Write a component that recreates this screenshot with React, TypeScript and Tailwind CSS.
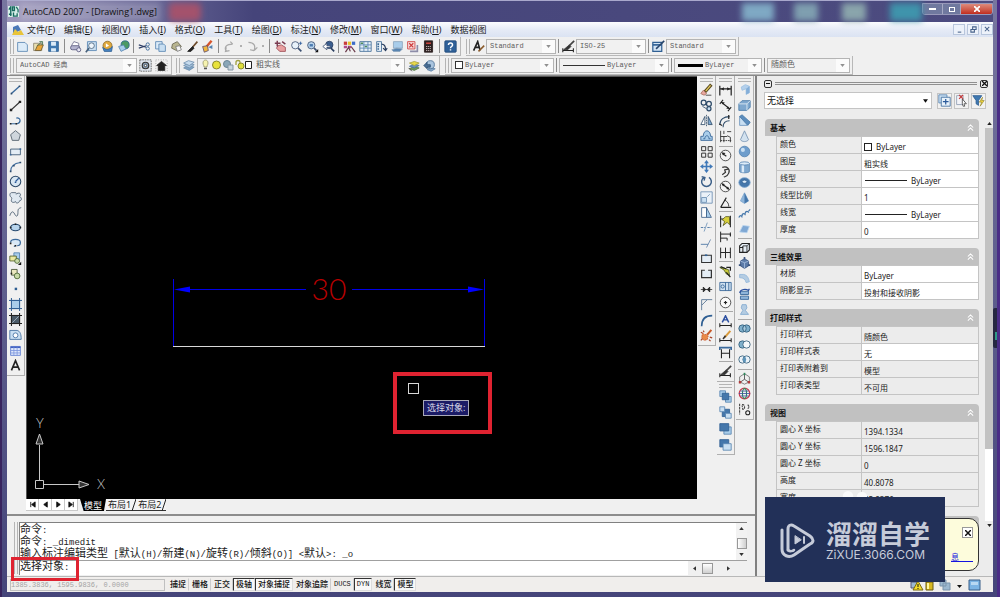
import React from 'react';
import clsx from 'clsx';

const CJK = 'font-["Noto_Sans","Noto_Sans_CJK_SC",sans-serif]';
const MONO = 'font-["Liberation_Mono","Noto_Sans_CJK_SC",monospace]';

// All icons are drawn on a 16x16 grid
const icons: Record<string, React.ReactNode> = {
  // standard toolbar
  new: <path d="M2 3h9l3 3v8H2z" fill="#dcebf8" stroke="#5583b0" />,
  open: (
    <>
      <path d="M2 4h10v9H2z" fill="#e9dfb0" stroke="#8a8470" />
      <path d="M4 13l3-7h7l-3 7z" fill="#e8a63a" stroke="#6b5a30" />
      <path d="M7 7l5-5M9 2h4v4" stroke="#3b6b45" />
    </>
  ),
  save: (
    <>
      <path d="M2 2h12v12H2z" fill="#3f78b0" stroke="#2f5f93" />
      <path d="M5 2h6v5H5zM5 10h6v4H5z" fill="#dcebf8" stroke="none" />
    </>
  ),
  plot: (
    <>
      <path d="M3 7l3-5 6 2v4" fill="#fff" stroke="#6a6a8a" />
      <rect x="2" y="7" width="11" height="5" rx="2" fill="#b5b5d0" stroke="#54547a" />
      <circle cx="12" cy="12" r="2.500" fill="#e8e8f4" stroke="#54547a" />
    </>
  ),
  preview: (
    <>
      <path d="M3 2h11v11H3z" fill="#c9dff2" stroke="#5583b0" />
      <circle cx="8" cy="7" r="3.500" fill="#eef6fc" stroke="#48617a" />
      <path d="M5 10l-4 5" stroke="#48617a" strokeWidth="2" />
    </>
  ),
  publish: (
    <>
      <circle cx="8" cy="7" r="5.500" fill="#e0a93c" stroke="#8c6a28" />
      <path d="M2 9c4 4 9 3 12-1l-1 6H4z" fill="#4a86c4" stroke="#2f5f93" />
      <path d="M6 4l4 3-4 2z" fill="#fff" stroke="none" />
    </>
  ),
  dwf: (
    <>
      <circle cx="10" cy="6" r="5" fill="#4c9a62" stroke="#2c6490" />
      <path d="M2 8l6-2 3 5-6 3z" fill="#a9cdea" stroke="#5583b0" />
    </>
  ),
  cut: (
    <>
      <path d="M1 6l9 3M1 10l9-3" stroke="#2c3e66" strokeWidth="1.300" />
      <circle cx="12" cy="5.500" r="2" stroke="#2f5f93" />
      <circle cx="12" cy="10.500" r="2" stroke="#2f5f93" />
    </>
  ),
  copy: (
    <>
      <path d="M2 2h8v9H2z" fill="#dcebf8" stroke="#5583b0" />
      <path d="M6 5h6l2 2v7H6z" fill="#c9dff2" stroke="#5583b0" />
    </>
  ),
  paste: (
    <>
      <path d="M3 5l6-3 5 6-6 5-6-3z" fill="#b9b58f" stroke="#65624d" />
      <path d="M7 8l5-1 2 5-5 2z" fill="#f6f6f6" stroke="#777" />
    </>
  ),
  match: (
    <>
      <path d="M14 2L8 9" stroke="#6c4a2a" strokeWidth="2" />
      <path d="M8 8l2 2-4 4H2z" fill="#222" stroke="#222" />
    </>
  ),
  block: (
    <>
      <path d="M13 1L7 8" stroke="#d8552c" strokeWidth="3" />
      <path d="M2 8l6-1 1 6-5 2z" fill="#f2b63c" stroke="#5a4a6a" />
      <path d="M9 9l5-3v5z" fill="#5583b0" stroke="none" />
    </>
  ),
  undo: <path d="M4 14c-3-5 0-9 8-9M12 5L9 2M4 9l-1 5 5-1" stroke="#a9a9a9" strokeWidth="1.500" />,
  redo: <path d="M3 3c7 0 9 4 7 10M10 13l-5-1M10 13l4-4" stroke="#a9a9a9" strokeWidth="1.500" />,
  pan: (
    <>
      <path d="M5 7l4-1 5 3v5H7l-4-4z" fill="#e8a0a0" stroke="#9a4a50" />
      <path d="M4 1v7M1 4h7M10 2l4 3" stroke="#7a3c50" strokeWidth="1.800" />
    </>
  ),
  zoomRt: (
    <>
      <circle cx="6.500" cy="6.500" r="4.500" fill="#e8f2fa" stroke="#3b4f70" />
      <path d="M10 10l4 4" stroke="#3b4f70" strokeWidth="2" />
      <path d="M11 4h4M13 2v4" stroke="#2b5a9a" />
    </>
  ),
  zoomWin: (
    <>
      <circle cx="6.500" cy="6.500" r="4.500" fill="#b9d4ec" stroke="#3b4f70" />
      <path d="M4.500 5h4v3h-4z" fill="#4a7ab0" stroke="none" />
      <path d="M10 10l3 3" stroke="#3b4f70" strokeWidth="2" />
      <path d="M15 11v4h-4z" fill="#111" stroke="none" />
    </>
  ),
  zoomPrev: (
    <>
      <circle cx="9" cy="6" r="4.500" fill="#3b5f90" stroke="#2b3f60" />
      <path d="M11 10l4 4" stroke="#2b3f60" strokeWidth="2" />
      <path d="M1 8l5-4v3h4v2H6v3z" fill="#fff" stroke="#3b4f70" />
    </>
  ),
  props: (
    <>
      <path d="M1 2h4v4H1z" fill="#c83c3c" stroke="none" />
      <path d="M6 2h4v4H6z" fill="#e6c028" stroke="none" />
      <path d="M11 2h4v4h-4z" fill="#3c6cc8" stroke="none" />
      <path d="M1 7h4v3H1zM6 7h4v3H6z" fill="#b04a8a" stroke="none" />
      <path d="M3 15l4-6 2 5M10 8l5 7" stroke="#6a3a4a" strokeWidth="1.500" />
    </>
  ),
  center: (
    <>
      <path d="M1 2h14v12H1z" fill="#e6f0f8" stroke="#3f6a94" />
      <path d="M6 2v12M11 2v12M1 6h14M1 10h14" stroke="#5583b0" />
      <path d="M2 3h3v2H2zM7 7h3v2H7z" fill="#4b8a5c" stroke="none" />
    </>
  ),
  palettes: (
    <>
      <path d="M2 2h6v12H2z" fill="#e6f0f8" stroke="#3f6a94" />
      <path d="M4 4v8" stroke="#3f6a94" strokeWidth="2" strokeDasharray="2 1" />
      <path d="M8 5c4 0 5 3 5 7M10 10l3 3 2-3" stroke="#2b3f60" strokeWidth="1.500" />
    </>
  ),
  sheets: (
    <>
      <path d="M3 2h11v8H3z" fill="#a9cdea" stroke="#8aa4bc" />
      <path d="M1 12l6-2 7 1-3 3H3z" fill="#5583b0" stroke="#8aa4bc" />
    </>
  ),
  markup: (
    <>
      <path d="M2 2h9v9H2z" fill="#f8dcdc" stroke="#cc3b3b" />
      <path d="M4 4l5 5M9 4L4 9" stroke="#cc3b3b" strokeWidth="1.500" />
      <path d="M5 14h9V6" stroke="#8c8ca8" strokeWidth="2" />
    </>
  ),
  calc: (
    <>
      <path d="M3 1h10v14H3z" fill="#2c2020" stroke="#2c2020" />
      <path d="M5 3h6v2H5z" fill="#c6433c" stroke="none" />
      <path d="M5 8h6M5 10.500h6M5 13h6" stroke="#e8d8d8" strokeDasharray="1.500 1" />
    </>
  ),
  help: (
    <>
      <rect x="1" y="1" width="14" height="14" rx="1" fill="#2f6199" stroke="#234a78" />
      <path d="M5.500 6c0-3 5-3 5 0 0 2-2.500 2-2.500 4M8 11.500v1.500" stroke="#fff" strokeWidth="1.800" />
    </>
  ),
  textStyle: (
    <>
      <path d="M2 13L7 2l3 11M4 9h5" stroke="#222" strokeWidth="2" />
      <path d="M15 7l-5 5-2 2" stroke="#8a5a2a" strokeWidth="2" />
    </>
  ),
  dimStyle: (
    <>
      <path d="M1 13h13M1 10v5M14 10v5" stroke="#222" strokeWidth="1.300" />
      <path d="M15 1L9 7" stroke="#444" strokeWidth="2" />
      <path d="M9 6l2 2-4 4H2z" fill="#333" stroke="#333" />
    </>
  ),
  tableStyle: (
    <>
      <path d="M1 3h11v11H1z" fill="#d3e4f4" stroke="#2f5f93" strokeWidth="1.500" />
      <path d="M1 6h11" stroke="#2f5f93" strokeWidth="2" />
      <path d="M15 1L8 8l-3 3" stroke="#27456b" strokeWidth="2" />
    </>
  ),
  gear: (
    <>
      <path d="M1 1h14v14H1z" fill="#dfe6ee" stroke="#555" strokeDasharray="2 1" />
      <circle cx="8" cy="8" r="4" fill="#8ba4bd" stroke="#333" strokeWidth="1.500" />
      <circle cx="8" cy="8" r="1.500" fill="#fff" stroke="#333" />
    </>
  ),
  home: (
    <>
      <path d="M1 1h14v14H1z" stroke="#999" strokeDasharray="1 2" />
      <path d="M8 3l6 5h-2v6H4V8H2z" fill="#222" stroke="#222" />
    </>
  ),
  layers: (
    <>
      <path d="M2 11l6-3 7 2-6 4z" fill="#7ea3c4" stroke="#6f8fae" />
      <path d="M2 8l6-3 7 2-6 4z" fill="#a4c0da" stroke="#6f8fae" />
      <path d="M2 5l6-3 7 2-6 4z" fill="#c6dbee" stroke="#6f8fae" />
    </>
  ),
  layerPrev: (
    <>
      <path d="M3 12l6-3 6 2-6 3z" fill="#6c9a58" stroke="#567a48" />
      <path d="M3 9l6-3 6 2-6 3z" fill="#6a93bd" stroke="#4b6f95" />
      <path d="M3 5l6-2 6 2-6 3z" fill="#e6d94a" stroke="#a8a040" />
      <path d="M2 11l4 4" stroke="#333" />
    </>
  ),
  layerStates: (
    <>
      <path d="M5 13l5-2 5 1-5 3z" fill="#86aacb" stroke="#5b7fa5" />
      <circle cx="9" cy="7" r="5" fill="#a9c4de" stroke="#4b6f95" />
      <path d="M1 8l4-4v3h4v3H5v2z" fill="#4b6f95" stroke="#2b4f75" />
    </>
  ),
  // draw toolbar
  line: (
    <>
      <path d="M3 13L13 4" stroke="#3b6a9c" strokeWidth="1.700" />
      <path d="M2 12h2v2H2zM12 3h2v2h-2z" fill="#2b4a6c" stroke="none" />
    </>
  ),
  xline: (
    <>
      <path d="M2 14L14 3" stroke="#333" strokeWidth="1.500" />
      <path d="M1 12h3v3H1zM12 2h3v3h-3z" fill="#222" stroke="none" />
    </>
  ),
  pline: (
    <>
      <path d="M2 12h9M9 5c6-1 6 6 1 7" stroke="#3b6a9c" strokeWidth="1.500" />
      <path d="M1 11h2v2H1zM8 11h2v2H8z" fill="#222" stroke="none" />
    </>
  ),
  polygon: <path d="M8 2l6 5-2 7H4L2 7z" fill="#cfd6dc" stroke="#4a5864" />,
  rect: (
    <>
      <path d="M2 5h12v7H2z" fill="#e4edf5" stroke="#34506c" />
      <path d="M1 11h2v2H1zM13 4h2v2h-2z" fill="#3b6a9c" stroke="none" />
    </>
  ),
  arc: (
    <>
      <path d="M2 14c0-6 4-10 12-11" stroke="#3b6a9c" strokeWidth="1.300" />
      <path d="M1 13h2v2H1zM5 6h2v2H5zM13 2h2v2h-2z" fill="#2b4a6c" stroke="none" />
    </>
  ),
  circle: (
    <>
      <circle cx="8" cy="8" r="6.500" fill="#d8e6f2" stroke="#2d4a68" strokeWidth="1.300" />
      <path d="M8 8l4-4M7 9h2" stroke="#2b5a9a" strokeWidth="1.500" />
    </>
  ),
  cloud: (
    <path
      d="M3 2h5c1 0 1 1 1 2 1-2 6-2 5 1l-1 2c3 1 3 5 0 5-1 4-5 3-5 1-2 2-6 1-5-2 0-1 1-2 0-3-2-1-3-5 0-6z"
      fill="#dfe8f0"
      stroke="#45586b"
    />
  ),
  spline: <path d="M1 12c2-6 4-6 6-2s4 3 4-2 1-5 4-6" stroke="#3f5468" />,
  ellipse: (
    <>
      <ellipse cx="8" cy="8" rx="6" ry="4" fill="#b7d4ec" stroke="#25486e" strokeWidth="1.500" />
      <path d="M1 7h2v2H1zM13 7h2v2h-2zM7 3h2v2H7z" fill="#222" stroke="none" />
    </>
  ),
  ellipseArc: (
    <>
      <path d="M2 8c0-5 12-5 12 0 0 3-2 4-4 4M8 12l-2 1" fill="#d8e8f6" stroke="#3b6a9c" strokeWidth="1.500" />
      <path d="M1 8h2v2H1zM7 11h2v2H7z" fill="#222" stroke="none" />
    </>
  ),
  insert: (
    <>
      <path d="M6 1h7v8H6z" fill="#a9cdea" stroke="#4b7dac" />
      <path d="M1 5h8v6H1z" fill="#ece9a0" stroke="#4b5a20" />
      <circle cx="10" cy="11" r="3" fill="#c9dba8" stroke="#44602c" />
      <path d="M15 12v4h-4z" fill="#111" stroke="none" />
    </>
  ),
  makeBlock: (
    <>
      <path d="M3 3h7v7H3z" fill="#ece9c0" stroke="#3c4a2c" />
      <circle cx="10" cy="11" r="3.500" fill="#c9dba8" stroke="#44602c" />
      <path d="M2 7h2v2H2z" fill="#222" stroke="none" />
    </>
  ),
  point: <path d="M7 7h3v3H7z" fill="#2f5f93" stroke="none" />,
  hatch: (
    <>
      <path d="M3 3h10v10H3z" fill="#a9cdea" stroke="#2f5f93" />
      <path d="M3 0v16M13 0v16M0 3h16M0 13h16" stroke="#2f5f93" strokeWidth="1.200" />
    </>
  ),
  gradient: (
    <>
      <path d="M3 3h10v10H3z" fill="#4a5a68" stroke="#222" />
      <path d="M3 0v16M13 0v16M0 3h16M0 13h16" stroke="#222" strokeWidth="1.300" />
      <path d="M4 12l8-8" stroke="#aab8c4" />
    </>
  ),
  region: (
    <>
      <path d="M1 3h9c4 1 5 5 5 11H1z" fill="#c9dff2" stroke="#3b6a9c" />
      <circle cx="8" cy="9" r="3" fill="#fff" stroke="#3b6a9c" />
    </>
  ),
  table: (
    <>
      <path d="M2 3h12v11H2z" fill="#dfe8fb" stroke="#5a7ad0" />
      <path d="M2 4h12" stroke="#4060c0" strokeWidth="2" />
      <path d="M6 4v10M10 4v10M2 8h12M2 11h12" stroke="#7a94dc" />
    </>
  ),
  mtext: <path d="M3 14L8 2l5 12M5 10h6" stroke="#222" strokeWidth="2" />,
  // modify toolbar
  erase: (
    <>
      <path d="M14 2L6 11" stroke="#5a4a20" strokeWidth="4" />
      <path d="M13 3L7 10" stroke="#e8d060" strokeWidth="1.500" />
      <path d="M4 9l4 4-3 2-4-2z" fill="#e8a8a0" stroke="#a86a5a" />
      <path d="M7 15h7" stroke="#333" />
    </>
  ),
  copyObj: (
    <>
      <circle cx="4.500" cy="4.500" r="3" stroke="#2d4a68" strokeWidth="1.500" />
      <circle cx="11" cy="6" r="3" stroke="#2d4a68" strokeWidth="1.500" />
      <circle cx="11" cy="12" r="2.500" fill="#c9dff2" stroke="#2d4a68" strokeWidth="1.500" />
      <path d="M3 9l5 3" stroke="#2d4a68" />
    </>
  ),
  mirror: (
    <>
      <path d="M6 3v10H1z" fill="#fff" stroke="#2d4a68" />
      <path d="M10 3v10h5z" fill="#7fa8cf" stroke="#2d4a68" />
      <path d="M8 1v14" stroke="#2d4a68" strokeDasharray="2 1" />
    </>
  ),
  offset: (
    <>
      <path d="M1 14V9h3c0-9 9-9 9 0h2v5z" fill="#a9cdea" stroke="#2f5f93" />
      <path d="M4 12h2c0-5 5-5 5 0h2" stroke="#2f5f93" />
    </>
  ),
  array: <path d="M2 2h5v5H2zM10 2h5v5h-5zM2 10h5v5H2zM10 10h5v5h-5z" stroke="#333" strokeWidth="1.200" />,
  move: (
    <path d="M8 0l3 4H9v3h3V5l4 3-4 3V9H9v3h2l-3 4-3-4h2V9H4v2L0 8l4-3v2h3V4H5z" fill="#3f78b8" stroke="none" />
  ),
  rotate: <path d="M5 3a6 6 0 1 0 6 0M2 2l4 1-1 4" stroke="#3b5f88" strokeWidth="1.800" />,
  scale: (
    <>
      <path d="M1 1h14v14H1z" fill="#eaf1f8" stroke="#6a8cb0" />
      <path d="M2 8h6v6H2z" fill="#c9dff2" stroke="#6a8cb0" />
      <path d="M9 7l3-3" stroke="#6a8cb0" />
    </>
  ),
  stretch: (
    <>
      <path d="M2 2h6v12H2z" fill="#fff" stroke="#3b5f88" />
      <path d="M8 2l6 12H8z" fill="#a9cdea" stroke="#3b5f88" />
    </>
  ),
  trim: (
    <>
      <path d="M1 8h5M9 8h5" stroke="#3b6a9c" strokeDasharray="3 1" />
      <path d="M5 13l4-11" stroke="#6a90b6" />
    </>
  ),
  extend: (
    <>
      <path d="M1 9h9" stroke="#3b6a9c" />
      <path d="M8 13l5-10" stroke="#5f80a8" />
    </>
  ),
  breakPt: (
    <>
      <path d="M2 4h12v9H2z" fill="#e4edf5" stroke="#333" strokeWidth="1.300" />
      <path d="M6 3h3v2H6z" fill="#2f5f93" stroke="none" />
    </>
  ),
  breakObj: <path d="M6 4H2v9h12V4h-4" fill="#e4edf5" stroke="#333" strokeWidth="1.500" />,
  join: (
    <>
      <path d="M1 8h14" stroke="#333" />
      <path d="M4 5l3 3-3 3zM12 5L9 8l3 3z" fill="#222" stroke="#222" />
    </>
  ),
  chamfer: <path d="M2 15V9l7-7h6M2 9V2h7" stroke="#4b6a8c" />,
  fillet: <path d="M2 15C2 6 7 2 15 2" stroke="#2f5f93" strokeWidth="2" />,
  explode: (
    <>
      <path d="M14 1l-5 6" stroke="#c85a28" strokeWidth="2.500" />
      <path d="M3 5l3 2 3-1 1 3-1 4-4 1-3-3z" fill="#e88a4a" stroke="#c8502a" strokeDasharray="2 1" />
      <path d="M1 4l2 1M4 2l1 2M12 10l3 1M11 13l2 2M1 14l2-2" stroke="#a8452a" strokeWidth="1.500" />
    </>
  ),
  // dimension toolbar
  dimLinear: (
    <>
      <path d="M1 2v12M15 2v12M1 6h14" stroke="#222" strokeWidth="1.500" />
      <path d="M2 6l4-2v4zM14 6l-4-2v4z" fill="#222" stroke="none" />
    </>
  ),
  dimAligned: (
    <>
      <path d="M3 4l10 8M1 6l4-5M11 15l4-5" stroke="#222" strokeWidth="1.300" />
      <path d="M3 4l4 0-2 3zM13 12l-4 0 2-3z" fill="#222" stroke="none" />
    </>
  ),
  dimArc: (
    <>
      <path d="M1 12C1 5 6 2 13 2M5 15c0-6 3-8 8-8" stroke="#2d4a68" strokeWidth="1.300" />
      <path d="M12 0v5M0 11l4 2" stroke="#222" strokeWidth="1.500" />
    </>
  ),
  dimOrd: (
    <>
      <path d="M2 1v14M6 1v4M6 8v7M2 8h8M10 2h5M10 7l4 2v6" stroke="#222" />
      <path d="M2 13h13" stroke="#222" strokeDasharray="2 1" />
    </>
  ),
  dimRadius: (
    <>
      <circle cx="8" cy="8" r="6.500" fill="#f4f4f4" stroke="#333" />
      <path d="M9 9L5 6" stroke="#222" strokeWidth="1.500" />
      <path d="M3 4l5 1-3 3z" fill="#222" stroke="none" />
    </>
  ),
  dimJog: <path d="M4 3c6-2 10 2 8 7s-5 4-6 5M4 12l4-3-1-3 4-1" stroke="#333" strokeWidth="1.500" />,
  dimDia: (
    <>
      <circle cx="8" cy="8" r="6.500" fill="#f4f4f4" stroke="#333" />
      <path d="M4 5l8 6" stroke="#222" strokeWidth="1.500" />
      <path d="M3 4l4 1-2 3zM13 12l-4-1 2-3z" fill="#222" stroke="none" />
    </>
  ),
  dimAng: (
    <>
      <path d="M2 14h13M2 14L9 2" stroke="#222" strokeWidth="1.300" />
      <path d="M7 5c4 2 5 5 5 8" stroke="#222" />
    </>
  ),
  quickDim: (
    <>
      <path d="M2 1v14M14 1v14M2 5h12" stroke="#222" strokeWidth="1.300" />
      <path d="M8 2h5v10l-3-3-5 4 2-5-3-2z" fill="#d8d03a" stroke="#5a5a20" />
    </>
  ),
  dimBase: <path d="M2 2v13M2 5h12v3M2 10h8v3M14 3v4" stroke="#222" strokeWidth="1.200" />,
  dimCont: <path d="M2 2v13M8 2v13M14 2v13M2 8h12" stroke="#222" strokeWidth="1.200" />,
  leader: (
    <>
      <path d="M1 3l6 1 5 2 1 7-4-2-3-5z" fill="#c8c83a" stroke="#4a5a20" />
      <path d="M9 9l5 6M2 2l7 3M9 3h5v4" stroke="#222" strokeWidth="1.500" />
    </>
  ),
  tolerance: (
    <>
      <path d="M1 3h14v10H1z" fill="#cfe0f0" stroke="#2f5f93" />
      <path d="M8 3v10M12 3v10" stroke="#2f5f93" />
      <circle cx="4.500" cy="8" r="2" stroke="#2f5f93" />
    </>
  ),
  centerMark: (
    <>
      <circle cx="8" cy="8" r="6.500" fill="#fafafa" stroke="#333" />
      <path d="M8 6v4M6 8h4" stroke="#222" strokeWidth="1.500" />
    </>
  ),
  dimEdit: (
    <>
      <path d="M4 9l4-8 4 8M5 6h6" stroke="#2b4fa0" strokeWidth="1.800" />
      <path d="M1 13h14M1 10v5M15 10v5" stroke="#222" strokeWidth="1.300" />
    </>
  ),
  dimTextEdit: (
    <>
      <path d="M14 1L7 9" stroke="#d89a3c" strokeWidth="2.500" />
      <path d="M8 7l-3 4" stroke="#333" strokeWidth="2" />
      <path d="M1 13h14M1 10v5M15 10v5" stroke="#222" strokeWidth="1.300" />
    </>
  ),
  dimUpdate: (
    <>
      <path d="M1 2h14M1 1v4M15 1v4" stroke="#3b6a9c" strokeWidth="2" />
      <path d="M3 4v11M13 4v11M3 9h10" stroke="#222" strokeWidth="1.300" />
    </>
  ),
  // draw order toolbar
  front: (
    <>
      <path d="M1 1h7v7H1zM8 8h7v7H8z" fill="#a9cdea" stroke="#5583b0" />
      <path d="M4 4h8v8H4z" fill="#4577ab" stroke="#2f5f93" />
    </>
  ),
  back: (
    <>
      <path d="M4 4h9v9H4z" fill="#4577ab" stroke="#2f5f93" />
      <path d="M1 1h6v6H1zM8 9h7v6H8z" fill="#c9dff2" stroke="#5583b0" />
    </>
  ),
  above: (
    <>
      <path d="M6 6h9v9H6z" fill="#a9cdea" stroke="#5583b0" />
      <path d="M1 2h11v9H1z" fill="#4577ab" stroke="#2f5f93" />
    </>
  ),
  under: (
    <>
      <path d="M1 2h11v9H1z" fill="#4577ab" stroke="#2f5f93" />
      <path d="M5 7h10v8H5z" fill="#c9dff2" stroke="#5583b0" />
    </>
  ),
  // solids toolbar
  polysolid: (
    <>
      <path d="M4 5l5-3 5 2v8l-4 2V7L5 9z" fill="#b4d0ec" stroke="#9cc0e2" />
      <path d="M10 7l4-3v8l-4 2z" fill="#84aed8" stroke="none" />
    </>
  ),
  box: (
    <>
      <path d="M1 6l4-4h10v8l-4 4H1z" fill="#7fa8cf" stroke="#4a7aa8" />
      <path d="M1 6h10v8M11 6l4-4" stroke="#e6f0f8" />
    </>
  ),
  wedge: (
    <>
      <path d="M2 3l12 8-3 3H2z" fill="#c9dff2" stroke="#6a93bd" />
      <path d="M2 3l3-2 10 9-3 4z" fill="#5c8dbd" stroke="#4a7aa8" />
    </>
  ),
  cone: <path d="M8 1l5 11c-2 3-8 3-10 0z" fill="#d3e2ef" stroke="#7390b0" />,
  sphere: (
    <>
      <circle cx="8" cy="8" r="6.500" fill="#6e9dcc" stroke="#5583b0" />
      <circle cx="6" cy="6" r="2.500" fill="#c9dff2" stroke="none" />
    </>
  ),
  cylinder: (
    <>
      <path d="M2 3v10c1 2 11 2 12 0V3" fill="#7fa8cf" stroke="#5583b0" />
      <path d="M6 4v10" stroke="#dcebf8" strokeWidth="3" />
      <ellipse cx="8" cy="3" rx="6" ry="2" fill="#dcebf8" stroke="#5583b0" />
    </>
  ),
  torus: (
    <>
      <ellipse cx="8" cy="8" rx="7" ry="6" fill="#4577ab" stroke="#7fa8cf" />
      <ellipse cx="8" cy="7" rx="3" ry="2" fill="#dcebf8" stroke="#2f5f93" />
    </>
  ),
  pyramid: (
    <>
      <path d="M8 1l5 10-5 3-5-3z" fill="#8fb5da" stroke="#7fa8cf" />
      <path d="M8 1l5 10-5 3z" fill="#4577ab" stroke="none" />
    </>
  ),
  helix: <path d="M1 13c2-4 4-2 4 0M5 11c0-4 4-3 4-1M9 8c0-4 4-3 4-1M13 5l2-2" stroke="#4577ab" strokeWidth="1.500" />,
  planar: <path d="M6 3l8 1-3 8-9-1z" fill="#7fa8d4" stroke="#b9d4ee" />,
  extrude: (
    <>
      <path d="M2 6l3-3h9v8l-3 3H6V8H2zM2 6v8h4M6 6v2" fill="#e4edf5" stroke="#222" strokeWidth="1.300" />
      <path d="M11 6v8M6 6h5l3-3" stroke="#222" />
    </>
  ),
  presspull: (
    <>
      <path d="M3 5l5-3 5 3v6l-5 3-5-3z" fill="#5c7ba8" stroke="#3b5580" />
      <path d="M3 5l5 2 5-2M8 7v7" stroke="#a8bfe0" />
      <path d="M1 10h3M12 10h3M8 0v3" stroke="#3b5580" strokeWidth="2" />
    </>
  ),
  sweep: <path d="M2 3h5c5 1 6 5 7 9l-4 1c-1-4-3-6-8-6z" fill="#b4cce2" stroke="#8fb5da" />,
  revolve: (
    <>
      <path d="M3 4h10v4H3zM3 10h10v4H3z" fill="#8fb5da" stroke="#2f5f93" />
      <path d="M2 6c1-5 8-5 11-3l1-2" stroke="#2b4fa0" strokeWidth="1.500" />
    </>
  ),
  loft: <path d="M5 2h5l1 4-2 3 4 5H3l3-5-2-3z" fill="#b4cce2" stroke="#7fa8cf" />,
  union: (
    <>
      <circle cx="5.500" cy="8" r="4.500" fill="#7fb0cc" stroke="#2d5a78" />
      <circle cx="10.500" cy="8" r="4.500" fill="#7fb0cc" stroke="#2d5a78" />
      <ellipse cx="8" cy="8" rx="2" ry="3.500" fill="#a8cce0" stroke="#2d5a78" />
    </>
  ),
  subtract: (
    <>
      <circle cx="5.500" cy="8" r="4.500" fill="#7fb0cc" stroke="#2d5a78" />
      <circle cx="10.500" cy="8" r="4.500" fill="#f4f8fb" stroke="#2d5a78" />
    </>
  ),
  intersect: (
    <>
      <circle cx="5.500" cy="8" r="4.500" fill="#eaf2f8" stroke="#2d5a78" />
      <circle cx="10.500" cy="8" r="4.500" fill="#eaf2f8" stroke="#2d5a78" />
      <ellipse cx="8" cy="8" rx="2" ry="3.500" fill="#5c93b8" stroke="none" />
    </>
  ),
  orbitC: (
    <>
      <path d="M8 9V2M8 9l-6 4M8 9l6 4" stroke="#444" />
      <path d="M2 6l6-4 6 4v6l-6 3-6-3z" stroke="#6a6a6a" />
      <path d="M7 1h2v3H7z" fill="#2b8a5a" stroke="none" />
      <path d="M1 11h3v3H1zM12 11h3v3h-3z" fill="#b03c3c" stroke="none" />
    </>
  ),
  orbitF: (
    <>
      <circle cx="8" cy="8" r="6.500" stroke="#c83c50" strokeWidth="1.500" />
      <ellipse cx="8" cy="8" rx="2.500" ry="6" stroke="#2b8a5a" strokeWidth="1.300" />
      <path d="M1 8h14M3 5h10M3 11h10" stroke="#3b4fa0" />
    </>
  ),
  walk: (
    <>
      <path d="M2 1v13M5 2c4-1 4 6 1 6l-1-5M12 2l2 3-2 2" stroke="#444" strokeWidth="1.300" strokeDasharray="3 1" />
      <circle cx="12" cy="12" r="2.500" stroke="#222" strokeWidth="1.300" />
    </>
  ),
  // properties palette buttons
  pickadd: (
    <>
      <path d="M1 1h10v10H1z" fill="#c9dff2" stroke="#5583b0" />
      <path d="M4 4h11v11H4z" fill="#e8f2fa" stroke="#3b6a9c" />
      <path d="M9.500 6v7M6 9.500h7" stroke="#2b5a9a" strokeWidth="1.500" />
    </>
  ),
  selectObj: (
    <>
      <path d="M2 2h8v11H2z" fill="#f4f4f8" stroke="#8c9ab0" />
      <path d="M5 1l5 5M10 1L5 6" stroke="#c83c3c" strokeWidth="1.500" />
      <path d="M9 6l5 6h-3l1 3-2 0-1-3z" fill="#fff" stroke="#444" />
    </>
  ),
  quickSel: (
    <>
      <path d="M1 2h11L8 8v6l-3-2V8z" fill="#3f78b0" stroke="#2f5f93" />
      <path d="M13 4l-4 6h3l-2 5 5-7h-3z" fill="#f0d83c" stroke="#8a7a20" strokeWidth=".7" />
    </>
  ),
};

const Icon = ({ name }: { name: string }) => (
  <svg viewBox="0 0 16 16" fill="none" className="size-[13px] shrink-0" aria-hidden="true">
    {icons[name]}
  </svg>
);

const ToolButton = ({ name }: { name: string }) => (
  <button type="button" aria-label={name} className="flex size-[15px] shrink-0 items-center justify-center">
    <Icon name={name} />
  </button>
);

const Grip = () => <span className="h-[15px] w-[4px] shrink-0 border-x border-[#b4b4b4]" />;
const Sep = () => <span className="mx-[2px] h-[14px] w-px shrink-0 bg-[#8c8c8c]" />;

const Bar = ({ children, className }: { children: React.ReactNode; className?: string }) => (
  <div className={clsx('flex h-full shrink-0 items-center border-r border-b border-[#b8b8b8] pr-[2px]', className)}>
    {children}
  </div>
);

interface ComboProps {
  label: string;
  value: string;
  lead?: React.ReactNode;
  large?: boolean;
  className: string;
}

const Combo: React.FC<ComboProps> = ({ label, value, lead, large = false, className }) => (
  <div className={clsx('flex h-[15px] shrink-0 items-center border border-[#b4b4b4] bg-[#f1f1f1] pl-[3px]', className)}>
    {lead}
    <select
      aria-label={label}
      className={clsx(
        'h-full min-w-0 flex-1 appearance-none text-[#5c5c5c] outline-none',
        large ? 'text-[8px]' : 'text-[7px]',
        MONO
      )}
    >
      <option>{value}</option>
    </select>
    <span className="flex h-full w-[13px] items-center justify-center bg-[#fbfbfb]">
      <svg viewBox="0 0 6 4" className="h-[3px] w-[5px]" aria-hidden="true">
        <path d="M0 0h6L3 4z" fill="#909090" />
      </svg>
    </span>
  </div>
);

const toolGroups = [
  ['new', 'open', 'save'],
  ['plot', 'preview', 'publish', 'dwf'],
  ['cut', 'copy', 'paste', 'match', 'block'],
  ['undo', 'dot', 'redo', 'dot'],
  ['pan', 'zoomRt', 'zoomWin', 'zoomPrev'],
  ['props', 'center', 'palettes', 'sheets', 'markup', 'calc'],
  ['help'],
];

const menus = ['文件(F)', '编辑(E)', '视图(V)', '插入(I)', '格式(O)', '工具(T)', '绘图(D)', '标注(N)', '修改(M)', '窗口(W)', '帮助(H)', '数据视图'];

const drawTools = [
  'line', 'xline', 'pline', 'polygon', 'rect', 'arc', 'circle', 'cloud', 'spline', 'ellipse',
  'ellipseArc', 'insert', 'makeBlock', 'point', 'hatch', 'gradient', 'region', 'table', 'mtext',
];

const modifyTools = [
  'erase', 'copyObj', 'mirror', 'offset', 'array', 'move', 'rotate', 'scale', 'stretch', 'trim',
  'extend', 'breakPt', 'breakObj', 'join', 'chamfer', 'fillet', 'explode',
];

const dimTools = [
  'dimLinear', 'dimAligned', 'dimArc', 'dimOrd', '-', 'dimRadius', 'dimJog', 'dimDia', 'dimAng', '-',
  'quickDim', 'dimBase', 'dimCont', '-', 'leader', 'tolerance', 'centerMark', '-',
  'dimEdit', 'dimTextEdit', 'dimUpdate', '-', 'dimStyle',
];

const orderTools = ['front', 'back', 'above', 'under'];

const solidTools = [
  'polysolid', 'box', 'wedge', 'cone', 'sphere', 'cylinder', 'torus', 'pyramid', 'helix', 'planar', '-',
  'extrude', 'presspull', 'sweep', 'revolve', 'loft', '-', 'union', 'subtract', 'intersect', '-',
  'orbitC', 'orbitF', 'walk',
];

const ToolColumn = ({ tools, className }: { tools: string[]; className: string }) => (
  <div className={clsx('flex w-[18px] shrink-0 flex-col items-center justify-between border-r border-b border-[#b0b0b0] pb-[2px]', className)}>
    <span className="mt-[2px] h-[4px] w-[13px] shrink-0 border-y border-[#b4b4b4]" />
    {tools.map((tool, i) =>
      tool === '-' ? (
        <span key={i} className="my-px h-px w-[14px] shrink-0 bg-[#a8a8a8]" />
      ) : (
        <ToolButton key={i} name={tool} />
      )
    )}
  </div>
);

const TitleBar = () => (
  <header className="flex h-[22px] shrink-0 items-start justify-between border-t border-[#a9a8cc] bg-linear-to-r from-[#9d97bb] via-[#45447a] via-25% to-[#4d4c80]">
    <div className="flex h-full min-w-0 flex-1 items-center">
      <svg viewBox="0 0 12 12" className="ml-px size-[11px]" aria-hidden="true">
        <rect width="12" height="12" fill="#d6efe8" />
        <path d="M1 4l2-3v10M5 1h2v4H5zM9 1l2 3v3M1 9h3M6 7v4h4V8" stroke="#17695f" strokeWidth="1.500" fill="none" />
      </svg>
      <h1 className='ml-1 bg-white/20 font-["Open_Sans",sans-serif] text-[9px] leading-3 whitespace-nowrap text-[#111] shadow-[0_0_6px_4px_rgba(255,255,255,0.2)]'>
        AutoCAD 2007 - [Drawing1.dwg]
      </h1>
      <span className="ml-3 h-[18px] w-8 rounded-sm bg-[#a4526c] blur-[3px]" />
      <span className="ml-auto h-[18px] w-8 bg-[#7fa9c4] blur-[3px]" />
      <span className="ml-5 h-[18px] w-6 bg-[#7f9fb0] blur-[3px]" />
      <span className="ml-6 h-[18px] w-6 bg-[#8aa5ac] blur-[3px]" />
      <span className="ml-6 h-[18px] w-8 bg-[#3f94ac] blur-[3px]" />
    </div>
    <div className="mt-[2px] flex h-[12px] overflow-hidden rounded-b-[3px] border border-[#c9cbe0]/60">
      <button type="button" aria-label="最小化" className="flex w-[20px] items-center justify-center border-r border-[#c9cbe0]/60 bg-[#70799f]">
        <span className="h-[2px] w-[7px] bg-white" />
      </button>
      <button type="button" aria-label="最大化" className="flex w-[18px] items-center justify-center border-r border-[#c9cbe0]/60 bg-[#70799f]">
        <span className="h-[5px] w-[6px] border border-white" />
      </button>
      <button type="button" aria-label="关闭" className="flex w-[31px] items-center justify-center bg-linear-to-b from-[#dd8a7c] to-[#c02a1c]">
        <svg viewBox="0 0 6 6" className="size-[6px]" aria-hidden="true">
          <path d="M0 0l6 6M6 0L0 6" stroke="#fff" strokeWidth="1.700" />
        </svg>
      </button>
    </div>
  </header>
);

const MenuBar = () => (
  <nav className="flex h-[15px] shrink-0 items-center bg-linear-to-b from-[#fbfcfe] via-[#e6ebf6] to-[#dbe3f2] pl-[5px]">
    <svg viewBox="0 0 12 12" className="size-[12px] shrink-0" aria-hidden="true">
      <path d="M1 3l5-2 3 5-8 4z" fill="#4a78b8" />
      <path d="M0 11l3-6 3 3 3-2 3 5z" fill="#e8c43a" />
    </svg>
    <ul className={clsx('ml-[3px] flex gap-[9px] text-[9px] leading-[13px] text-[#1c1c1c]', CJK)}>
      {menus.map((menu) => (
        <li key={menu} className="shrink-0">
          <button type="button" className="block whitespace-nowrap">
            {menu.slice(0, 2)}
            {menu.includes('(') ? <>({<u>{menu[3]}</u>})</> : menu.slice(2)}
          </button>
        </li>
      ))}
    </ul>
    <div className="ml-auto flex gap-[2px]">
      {['M2 7h4', 'M3 1h4v3H3zM1 4h4v3H1z', 'M1 1l5 5M6 1L1 6'].map((d) => (
        <button key={d} type="button" aria-label="窗口" className="flex h-[11px] w-[12px] items-center justify-center border border-[#b8c6dc] bg-[#edf2fa]">
          <svg viewBox="0 0 8 8" className="size-[7px]" aria-hidden="true">
            <path d={d} stroke="#46618a" strokeWidth="1.200" fill="none" />
          </svg>
        </button>
      ))}
    </div>
  </nav>
);

const layerLead = (
  <svg viewBox="0 0 52 12" className="mr-[3px] h-[12px] w-[52px] shrink-0" fill="none" aria-hidden="true">
    <path d="M2 4c0-4 5-4 5 0 0 2-1 2-1 4H3c0-2-1-2-1-4z" fill="#f6f3b0" stroke="#8a8a60" strokeWidth=".7" />
    <path d="M3 9.500h3" stroke="#555" strokeWidth="1.500" />
    <circle cx="15.500" cy="6" r="4" fill="#e8e23a" stroke="#8a8a30" />
    <circle cx="26" cy="5" r="3.500" fill="#8aa7b8" stroke="#6b8494" />
    <path d="M27 6h5v5h-5z" fill="#c9d6de" stroke="#8496a4" />
    <path d="M35 6V3c0-2 4-2 4 0v2" stroke="#a0a040" strokeWidth="1.300" />
    <circle cx="40" cy="7" r="3" fill="#dede3c" stroke="#8a8a30" />
    <path d="M44.500 2.500h6v7h-6z" fill="#fff" stroke="#222" />
  </svg>
);

const swatch = <span className="mr-[2px] size-[8px] shrink-0 border border-[#333] bg-white" />;

const Toolbars = () => (
  <>
    <div className="flex h-[19px] shrink-0 bg-[#f0f0f0] pl-[3px]">
      <Bar className="w-[451px] justify-between">
        <Grip />
        {toolGroups.map((group, i) => (
          <React.Fragment key={i}>
            {i > 0 && <Sep />}
            {group.map((tool, j) =>
              tool === 'dot' ? (
                <button key={j} type="button" aria-label="更多" className="flex h-[15px] w-[6px] items-center justify-center">
                  <span className="size-[2px] bg-[#b0b0b0]" />
                </button>
              ) : (
                <ToolButton key={j} name={tool} />
              )
            )}
          </React.Fragment>
        ))}
      </Bar>
      <Bar className="ml-[5px]">
        <Grip />
        <span className="w-px" />
        <ToolButton name="textStyle" />
        <Combo label="文字样式" value="Standard" className="w-[70px]" />
        <Sep />
        <ToolButton name="dimStyle" />
        <Combo label="标注样式" value="ISO-25" className="w-[70px]" />
        <Sep />
        <ToolButton name="tableStyle" />
        <Combo label="表格样式" value="Standard" className="w-[70px]" />
      </Bar>
    </div>
    <div className="flex h-[20px] shrink-0 border-b border-[#8a8a8a] bg-[#f0f0f0] pl-[3px]">
      <Bar className="gap-px">
        <Grip />
        <Combo label="工作空间" value="AutoCAD 经典" className="ml-px w-[121px]" />
        <ToolButton name="gear" />
        <ToolButton name="home" />
      </Bar>
      <Bar className="ml-[4px] gap-px">
        <Grip />
        <ToolButton name="layers" />
        <Combo label="图层" value="粗实线" lead={layerLead} large className="w-[208px]" />
        <ToolButton name="layerPrev" />
        <ToolButton name="layerStates" />
      </Bar>
      <Bar className="ml-[5px]">
        <Grip />
        <Combo label="颜色控制" value="ByLayer" lead={swatch} className="ml-[2px] w-[103px]" />
        <Sep />
        <Combo
          label="线型控制"
          value="ByLayer"
          lead={<span className="mr-[2px] h-px w-[42px] shrink-0 bg-[#333]" />}
          className="w-[110px]"
        />
        <Sep />
        <Combo
          label="线宽控制"
          value="ByLayer"
          lead={<span className="mr-[2px] h-[3px] w-[25px] shrink-0 bg-black" />}
          className="w-[88px]"
        />
        <Sep />
        <Combo label="打印样式控制" value="随颜色" large className="w-[83px]" />
      </Bar>
    </div>
  </>
);

const Drawing = () => (
  <main className="relative min-h-0 flex-1 overflow-hidden border-t border-l border-[#555] bg-black">
    <svg width="330" height="90" viewBox="0 0 330 90" className="absolute top-[192px] left-[136px]" aria-label="尺寸标注">
      <path d="M10.500 10v67M321.500 10v67M26 20.500h117M189 20.500h118" stroke="#0000e6" />
      <path d="M11 20.500l16-3v6zM321 20.500l-16-3v6z" fill="#0000ff" />
      <path d="M10 77.500h312" stroke="#d8d8d8" />
      <text x="166" y="31" textAnchor="middle" fill="#b80000" className='font-["Lato",sans-serif] text-[30px] font-light'>
        30
      </text>
    </svg>

    <svg width="90" height="84" viewBox="0 0 90 84" className="absolute bottom-0 left-[5px]" fill="none" aria-label="UCS">
      <path d="M3.500 65.500h8v8h-8zM7.500 65V30M12 69.500h36" stroke="#c8c8c8" />
      <path d="M7.500 19l3.500 10H4zM57 69.500L47 66v7z" fill="#333" stroke="#c8c8c8" />
      <text x="4" y="13" fill="#c8c8c8" className='font-["Lato",sans-serif] text-[13px] font-light'>Y</text>
      <text x="65" y="74" fill="#c8c8c8" className='font-["Lato",sans-serif] text-[13px] font-light'>X</text>
    </svg>

    <div className="absolute top-[295px] left-[366px] h-[62px] w-[99px] border-[4px] border-[#df2331]">
      <span className="absolute top-[7px] left-[11px] size-[11px] border border-[#d8d8d8]" />
      <span className={clsx('absolute top-[24px] left-[26px] border border-[#a8a8b8] bg-[#1b1b66] px-[3px] text-[9px] leading-[14px] whitespace-nowrap text-[#d8d8e8]', CJK)}>
        选择对象:
      </span>
    </div>
  </main>
);

const LayoutTabs = () => (
  <div className="flex h-[15px] shrink-0 items-start bg-[#f0f0f0]">
    {['M2 1v6M7 1L3 4l4 3z', 'M6 1L2 4l4 3z', 'M2 1l4 3-4 3z', 'M6 1v6M1 1l4 3-4 3z'].map((d) => (
      <button key={d} type="button" aria-label="布局导航" className="flex h-[12px] w-[13px] items-center justify-center border-r border-b border-[#c8c8c8] bg-white">
        <svg viewBox="0 0 8 8" className="size-[7px]" aria-hidden="true">
          <path d={d} fill="#111" stroke="#111" />
        </svg>
      </button>
    ))}
    <div className={clsx('flex h-[12px] text-[9px] leading-[11px]', CJK)}>
      <button type="button" className="ml-[2px] bg-black px-[4px] text-white [clip-path:polygon(0_0,100%_0,92%_100%,14%_100%)]">模型</button>
      {['布局1', '布局2'].map((tab) => (
        <button key={tab} type="button" className="flex border-b border-[#333] bg-[#f4f4f4] pl-[2px] text-[#222]">
          {tab}
          <svg viewBox="0 0 5 12" className="h-[12px] w-[5px]" aria-hidden="true">
            <path d="M5 0L1 12" stroke="#222" />
          </svg>
        </button>
      ))}
    </div>
  </div>
);

// Half-width characters are set smaller so two of them fill one ideograph
const CommandText = ({ text }: { text: string }) => (
  <>
    {text.split(/([\x20-\x7e]+)/).map((part, i) => (
      <span key={i} className={clsx('leading-none whitespace-pre', i % 2 === 1 && 'text-[9px]')}>
        {part}
      </span>
    ))}
  </>
);

const CommandWindow = () => (
  <section className="relative h-[62px] shrink-0 border-t-2 border-[#8c8c8c] bg-[#f0f0f0] pt-[6px] pr-[8px] pl-[7px]">
    <div className="flex">
      <span className="mr-px h-[52px] w-[4px] shrink-0 border-x border-[#b4b4b4]" />
      <div className="min-w-0 flex-1 border-t border-l border-[#808080]">
        <div className="flex h-[38px] border-b border-[#a0a0a0] bg-white">
          <div className={clsx('flex min-w-0 flex-1 flex-col justify-end text-[11px] text-[#222]', MONO)}>
            {['命令:', '命令: _dimedit', '输入标注编辑类型 [默认(H)/新建(N)/旋转(R)/倾斜(O)] <默认>: _o'].map((line) => (
              <p key={line} className="h-[12px] leading-[12px] whitespace-nowrap">
                <CommandText text={line} />
              </p>
            ))}
          </div>
          <div className="flex w-[11px] flex-col items-center justify-between bg-[#f2f2f2] py-[4px]">
            <svg viewBox="0 0 6 4" className="h-[3px] w-[5px]" aria-hidden="true"><path d="M0 4h6L3 0z" fill="#333" /></svg>
            <span className="mt-1 h-[11px] w-[10px] border border-[#989898] bg-linear-to-r from-white to-[#cfcfcf]" />
            <svg viewBox="0 0 6 4" className="h-[3px] w-[5px]" aria-hidden="true"><path d="M0 0h6L3 4z" fill="#333" /></svg>
          </div>
        </div>
        <div className="flex h-[14px] bg-white">
          <label htmlFor="command" className={clsx('shrink-0 text-[11px] leading-[13px] text-[#222]', MONO)}>
            <CommandText text="选择对象:" />
          </label>
          <input id="command" className="min-w-0 flex-1 outline-none" />
          <div className="flex w-[59px] items-center gap-[6px] bg-[#f0f0f0] pl-[5px]">
            <svg viewBox="0 0 4 6" className="h-[5px] w-[3px]" aria-hidden="true"><path d="M4 0v6L0 3z" fill="#333" /></svg>
            <span className="size-[11px] border border-[#989898] bg-linear-to-b from-white to-[#cfcfcf]" />
            <svg viewBox="0 0 4 6" className="ml-2 h-[5px] w-[3px]" aria-hidden="true"><path d="M0 0v6l4-3z" fill="#333" /></svg>
          </div>
        </div>
      </div>
    </div>
    <span className="absolute bottom-[-5px] left-[4px] z-10 h-[24px] w-[68px] border-[3px] border-[#df2331]" />
  </section>
);

type Row = { name: string; value: string; lead?: 'swatch' | 'line'; readOnly?: boolean };

const sections: { title: string; rows: Row[] }[] = [
  {
    title: '基本',
    rows: [
      { name: '颜色', value: 'ByLayer', lead: 'swatch' },
      { name: '图层', value: '粗实线' },
      { name: '线型', value: 'ByLayer', lead: 'line' },
      { name: '线型比例', value: '1' },
      { name: '线宽', value: 'ByLayer', lead: 'line' },
      { name: '厚度', value: '0' },
    ],
  },
  {
    title: '三维效果',
    rows: [
      { name: '材质', value: 'ByLayer' },
      { name: '阴影显示', value: '投射和接收阴影' },
    ],
  },
  {
    title: '打印样式',
    rows: [
      { name: '打印样式', value: '随颜色', readOnly: true },
      { name: '打印样式表', value: '无' },
      { name: '打印表附着到', value: '模型', readOnly: true },
      { name: '打印表类型', value: '不可用', readOnly: true },
    ],
  },
  {
    title: '视图',
    rows: [
      { name: '圆心 X 坐标', value: '1394.1334', readOnly: true },
      { name: '圆心 Y 坐标', value: '1596.1847', readOnly: true },
      { name: '圆心 Z 坐标', value: '0', readOnly: true },
      { name: '高度', value: '40.8078', readOnly: true },
      { name: '宽度', value: '65.8376', readOnly: true },
    ],
  },
];

const PropertySection = ({ title, rows }: { title: string; rows: Row[] }) => (
  <section>
    <h2 className="flex h-[17px] items-center justify-between rounded-t-[4px] bg-[#c1c1c1] pr-[5px] pl-[5px] text-[8px] font-bold text-[#111]">
      {title}
      <svg viewBox="0 0 8 8" className="size-[7px]" fill="none" aria-hidden="true">
        <path d="M1 4l3-3 3 3M1 7.500l3-3 3 3" stroke="#fff" strokeWidth="1.200" />
      </svg>
    </h2>
    <div className="pl-[11px]">
      <table className="w-full table-fixed border-collapse text-[8px] leading-[13px] text-[#222]">
        <tbody>
          {rows.map((row) => (
            <tr key={row.name} className="h-[17px]">
              <th scope="row" className="w-[85px] border border-[#c4c4c4] p-0 pl-[3px] text-left align-top font-normal">
                {row.name}
              </th>
              <td className={clsx('border border-[#c4c4c4] p-0 pl-[2px] align-bottom', row.readOnly ? 'bg-[#ececec]' : 'bg-white')}>
                <span className="flex items-center">
                  {row.lead === 'swatch' && <span className="mr-[4px] size-[8px] border border-[#222]" />}
                  {row.lead === 'line' && <span className="mr-[4px] ml-px h-px w-[42px] bg-[#222]" />}
                  {row.value}
                </span>
              </td>
            </tr>
          ))}
        </tbody>
      </table>
    </div>
  </section>
);

const PropertiesPalette = () => (
  <aside className={clsx('relative flex w-[238px] shrink-0 flex-col border-l-2 border-[#808080] bg-[#ececec] pl-[7px]', CJK)}>
    <div className="mt-[3px] flex h-[9px] shrink-0 items-center gap-[3px] pr-[5px]">
      <button type="button" aria-label="折叠" className="flex size-[8px] items-center justify-center rounded-[2px] border border-[#333]">
        <span className="h-px w-[4px] bg-[#111]" />
      </button>
      <span className="h-[3px] flex-1 border-y border-[#909090]" />
      <button type="button" aria-label="关闭特性" className="flex size-[8px] items-center justify-center rounded-[2px] border border-[#333]">
        <svg viewBox="0 0 6 6" className="size-[5px]" aria-hidden="true"><path d="M0 0l6 6M6 0L0 6" stroke="#111" strokeWidth="1.500" /></svg>
      </button>
    </div>
    <div className="mt-[4px] flex h-[17px] shrink-0 items-center gap-[2px] pr-[7px]">
      <div className="mr-[3px] flex h-full flex-1 items-center border border-[#c4c4c4] bg-white pr-[3px] pl-[2px]">
        <select aria-label="选择" className="h-full min-w-0 flex-1 appearance-none text-[9px] text-[#111] outline-none">
          <option>无选择</option>
        </select>
        <svg viewBox="0 0 6 4" className="h-[4px] w-[5px]" aria-hidden="true"><path d="M0 0h6L3 4z" fill="#111" /></svg>
      </div>
      {['pickadd', 'selectObj', 'quickSel'].map((name) => (
        <button key={name} type="button" aria-label={name} className="flex h-[16px] w-[15px] items-center justify-center border border-[#c4c4c4] bg-[#f2f2f2]">
          <Icon name={name} />
        </button>
      ))}
    </div>
    <div className="mt-[10px] flex min-h-0 flex-1">
      <div className="flex min-w-0 flex-1 flex-col gap-[9px] overflow-hidden pl-px">
        {sections.map((section) => (
          <PropertySection key={section.title} {...section} />
        ))}
        <span className="h-[17px] shrink-0 rounded-t-[4px] bg-[#c1c1c1]" />
      </div>
      <div className="ml-[6px] mb-[46px] flex w-[8px] shrink-0 flex-col items-center bg-white">
        <span className="flex h-[9px] w-full items-center justify-center bg-[#ececec]">
          <svg viewBox="0 0 6 4" className="h-[3px] w-[5px]" aria-hidden="true"><path d="M0 4h6L3 0z" fill="#222" /></svg>
        </span>
        <span className="h-[321px] w-full bg-[#c2c2c2]" />
        <span className="mt-auto flex h-[9px] w-full items-center justify-center bg-[#ececec]">
          <svg viewBox="0 0 6 4" className="h-[3px] w-[5px]" aria-hidden="true"><path d="M0 0h6L3 4z" fill="#222" /></svg>
        </span>
      </div>
    </div>

    <div className="absolute right-[14px] bottom-[5px] flex h-[53px] w-[150px] flex-col items-end justify-between rounded-[10px] border border-[#333] bg-[#fdfcdc] px-[5px] py-[8px]">
      <button type="button" aria-label="关闭通知" className="flex size-[11px] items-center justify-center border border-[#999] bg-white">
        <svg viewBox="0 0 6 6" className="size-[6px]" aria-hidden="true"><path d="M0 0l6 6M6 0L0 6" stroke="#111" strokeWidth="1.500" /></svg>
      </button>
      <a href="#info" className="border-b border-[#1414e0] pr-[14px] text-[8px] leading-[9px] text-[#1414e0]">息</a>
    </div>
  </aside>
);

const modes = [
  { label: '捕捉' }, { label: '栅格' }, { label: '正交' }, { label: '极轴', on: true }, { label: '对象捕捉', on: true },
  { label: '对象追踪' }, { label: 'DUCS' }, { label: 'DYN', on: true }, { label: '线宽' }, { label: '模型', on: true },
];

const StatusBar = () => (
  <footer className={clsx('flex h-[16px] shrink-0 items-center border-t border-[#b8b8b8] bg-[#f0eeec] pr-[12px] pl-[3px] text-[7px]', MONO)}>
    <output className="mr-[2px] h-[12px] w-[155px] border border-[#c0c0c0] leading-[10px] text-[#a4a4a4]">
      1385.3836, 1595.9836, 0.0000
    </output>
    {modes.map((mode) => (
      <button
        key={mode.label}
        type="button"
        aria-pressed={!!mode.on}
        className={clsx(
          'h-[13px] border px-[2px] leading-[11px] font-medium whitespace-nowrap text-[#111]',
          mode.on ? 'border-t-[#333] border-r-[#ddd] border-b-[#ddd] border-l-[#333] bg-[#f8f8f8]' : 'border-transparent border-r-[#ccc]',
          mode.label.startsWith('D') ? 'text-[7px]' : 'text-[8px]'
        )}
      >
        {mode.label}
      </button>
    ))}
    <svg viewBox="0 0 72 14" className="ml-auto h-[14px] w-[72px]" fill="none" aria-hidden="true">
      <path d="M2 4h6v6H2z" fill="#9cb8d0" stroke="#557" />
      <path d="M9 3l5 9H4z" fill="#f4dc28" stroke="#7a6a10" />
      <path d="M9 6v3M9 10v1" stroke="#111" />
      <path d="M17 4h7v8h-7z" fill="#d8b820" stroke="#6a5a10" />
      <path d="M19 5v6" stroke="#fff6a0" strokeWidth="2" />
      <path d="M31 2h6v6h-6zM34 5h7v7h-7z" fill="#9cb8d0" stroke="#7a94ac" />
      <path d="M48 7h5l-2.500 3z" fill="#111" />
      <path d="M60 2h11v10H60z" fill="#7cb4e4" stroke="#3b5f88" />
      <path d="M62 4h7v3h-7z" fill="#b8d8f2" />
    </svg>
  </footer>
);

const Watermark = () => (
  <div className="absolute right-[52px] bottom-[15px] z-20 flex h-[85px] w-[180px] items-center bg-[#223058] pl-[14px] text-[#c6cbd9]">
    <svg viewBox="0 0 28 8" className="absolute -top-[7px] left-[76px] h-[7px] w-[28px]" aria-hidden="true">
      <circle cx="6" cy="7" r="6" fill="#fafafa" />
      <circle cx="22" cy="8" r="6" fill="#fafafa" />
    </svg>
    <svg viewBox="0 0 36 36" className="size-[36px] shrink-0" fill="none" stroke="currentColor" strokeLinecap="round" strokeLinejoin="round" aria-hidden="true">
      <path d="M9 28V7c0-4 3-5 6-3l16 10c4 3 4 6 0 8L15 33c-5 3-12 1-12-6V8" strokeWidth="3" />
      <path d="M9 28c2 2 5 1 6 0" strokeWidth="2.500" />
      <path d="M16 14v8l6-4z" fill="currentColor" strokeWidth="1" />
      <path d="M25 15v6" strokeWidth="2" />
    </svg>
    <div className="ml-[11px]">
      <p className='font-["Noto_Sans_CJK_SC",sans-serif] text-[26px] leading-[30px] font-bold whitespace-nowrap'>溜溜自学</p>
      <p className='font-["Inter",sans-serif] text-[12px] leading-[14px] whitespace-nowrap'>ZiXUE.3066.COM</p>
    </div>
  </div>
);

const App: React.FC = () => {
  return (
    <div className="relative flex h-screen flex-col overflow-hidden border-r-[3px] border-l-2 border-r-[#4a2c86] border-l-[#38245e] bg-[#55558a] bg-linear-to-b from-[#77769f] to-[#45457a] pr-[4px] pb-[5px] pl-[5px]">
      <TitleBar />
      <MenuBar />
      <Toolbars />
      <div className="flex min-h-0 flex-1 bg-[#f0f0f0]">
        <div className="flex min-w-0 flex-1 flex-col">
          <div className="flex min-h-0 flex-1">
            <ToolColumn tools={drawTools} className="mr-px h-[300px]" />
            <div className="flex min-w-0 flex-1 flex-col">
              <Drawing />
              <LayoutTabs />
            </div>
            <div className="flex shrink-0 items-start gap-px pr-px pl-px">
              <ToolColumn tools={modifyTools} className="h-[270px]" />
              <div>
                <ToolColumn tools={dimTools} className="h-[306px]" />
                <ToolColumn tools={orderTools} className="h-[73px]" />
              </div>
              <ToolColumn tools={solidTools} className="h-[344px]" />
            </div>
          </div>
          <CommandWindow />
        </div>
        <PropertiesPalette />
      </div>
      <StatusBar />
      <Watermark />
      <div className="absolute top-[308px] -right-[3px] flex h-[40px] w-[7px] items-center justify-center rounded-l-[2px] bg-[#262842]">
        <span className="mt-4 h-[8px] w-[3px] bg-[#2e9a86]" />
      </div>
    </div>
  );
};

export default App;
